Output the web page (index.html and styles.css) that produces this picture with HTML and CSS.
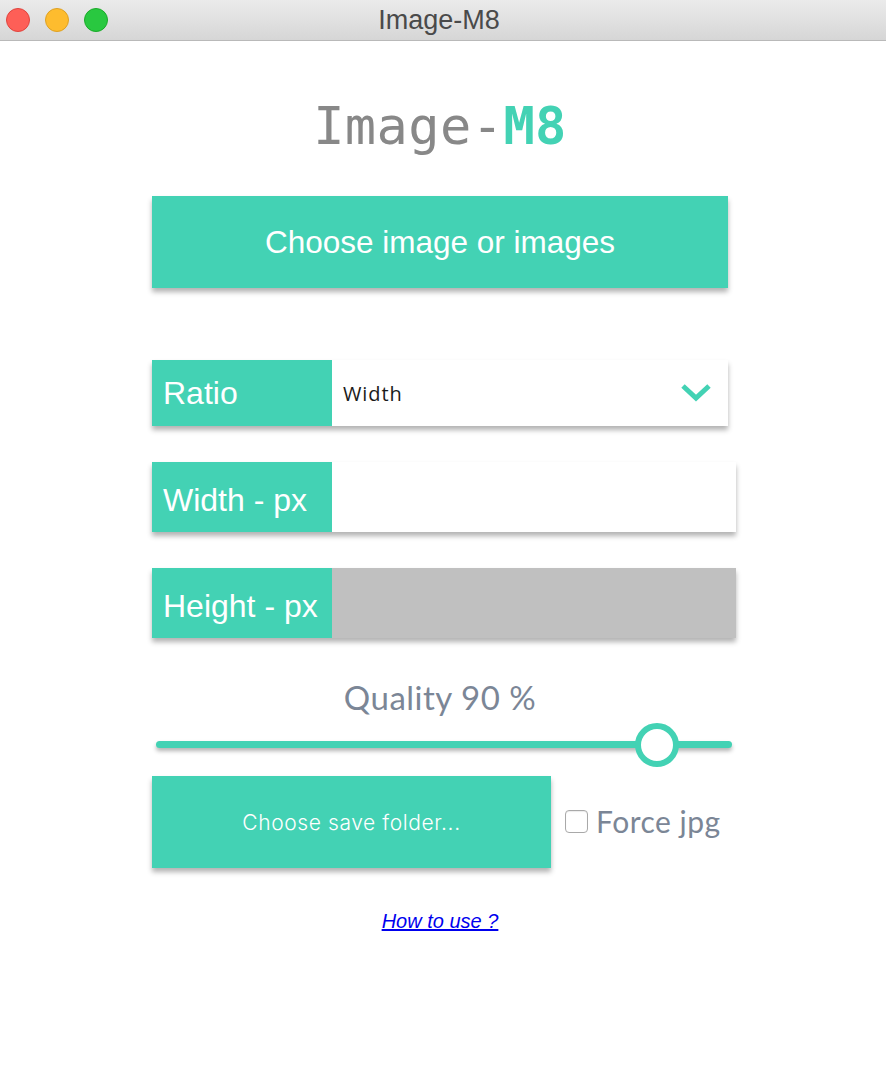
FILE: index.html
```html
<!DOCTYPE html>
<html>
<head>
<meta charset="utf-8">
<link rel="stylesheet" href="styles.css">
</head>
<body>
<div class="titlebar">
  <div class="lights">
    <span class="light red"></span>
    <span class="light yellow"></span>
    <span class="light green"></span>
  </div>
  <div class="wintitle">Image-M8</div>
</div>
<main class="app">
  <h1 class="logo"><span class="logo-a">Image-</span><span class="logo-b">M8</span></h1>
  <div class="btn btn-big">Choose image or images</div>

  <div class="field field-ratio">
    <div class="label">Ratio</div>
    <div class="select">
      <span>Width</span>
      <svg class="chev" width="32" height="20" viewBox="0 0 32 20"><path d="M3 4 L16 16 L29 4" fill="none" stroke="#43d2b4" stroke-width="5"/></svg>
    </div>
  </div>

  <div class="field field-wide">
    <div class="label">Width - px</div>
    <div class="input"></div>
  </div>

  <div class="field field-wide">
    <div class="label">Height - px</div>
    <div class="input disabled"></div>
  </div>

  <div class="quality">Quality 90 %</div>
  <div class="slider">
    <div class="track"></div>
    <div class="thumb"></div>
  </div>

  <div class="save-row">
    <div class="btn btn-save">Choose save folder...</div>
    <label class="force"><span class="box"></span><span>Force jpg</span></label>
  </div>

  <div class="help"><a href="#">How to use ?</a></div>
</main>
</body>
</html>
```

FILE: styles.css
```css
html, body {
  margin: 0;
  padding: 0;
  background: #ffffff;
  width: 886px;
  height: 1092px;
  overflow: hidden;
}

.titlebar {
  height: 40px;
  border-bottom: 1px solid #b9b9b9;
  background: linear-gradient(#ebebeb, #d6d6d6);
  display: flex;
  align-items: center;
  justify-content: center;
  position: relative;
}

.lights {
  position: absolute;
  left: 6px;
  top: 8px;
  display: flex;
  gap: 15px;
}

.light {
  width: 24px;
  height: 24px;
  border-radius: 50%;
  box-sizing: border-box;
}
.red { background: #fe5f57; border: 1px solid #e0443e; }
.yellow { background: #febc2e; border: 1px solid #dea123; }
.green { background: #29c840; border: 1px solid #1aab29; }

.wintitle {
  font-family: "Liberation Sans", Arial, sans-serif;
  font-size: 27px;
  color: #4a4a4a;
  margin-left: -8px;
}

.app {
  margin-left: 152px;
  width: 576px;
  display: flex;
  flex-direction: column;
}

.logo {
  margin: 57px 0 0;
  height: 56px;
  line-height: 56px;
  text-align: center;
  font-family: "DejaVu Sans Mono", monospace;
  font-size: 52px;
  font-weight: normal;
  letter-spacing: 0.4px;
}
.logo-a { color: #888888; }
.logo-b { color: #43d2b4; font-weight: bold; }

.btn {
  background: #43d2b4;
  color: #ffffff;
  display: flex;
  align-items: center;
  justify-content: center;
  box-shadow: 0 4px 5px rgba(0, 0, 0, 0.3);
}

.btn-big {
  margin-top: 42px;
  height: 92px;
  font-family: "Liberation Sans", Arial, sans-serif;
  font-size: 31.5px;
}

.field {
  display: flex;
  box-shadow: 0 4px 5px rgba(0, 0, 0, 0.3);
}

.label {
  width: 180px;
  flex: none;
  background: #43d2b4;
  color: #ffffff;
  font-family: "Liberation Sans", Arial, sans-serif;
  font-size: 32px;
  display: flex;
  align-items: center;
  padding-left: 11px;
  box-sizing: border-box;
}

.field-ratio {
  margin-top: 72px;
  height: 66px;
}

.select {
  flex: 1;
  background: #ffffff;
  display: flex;
  align-items: center;
  justify-content: space-between;
  padding: 0 16px 0 11px;
  font-family: "Open Sans", "Noto Sans", sans-serif;
  font-size: 20px;
  letter-spacing: 0.9px;
  color: #1a1a1a;
}

.chev { margin-top: -2px; }

.field-wide {
  width: 584px;
  height: 70px;
  margin-top: 36px;
}
.field-wide .label { padding-top: 6px; }

.input {
  flex: 1;
  background: #ffffff;
}
.input.disabled { background: #c0c0c0; }

.quality {
  margin-top: 39px;
  text-align: center;
  font-family: "Comic Sans MS", "Lato", sans-serif;
  font-size: 33px;
  letter-spacing: 0.5px;
  color: #7b8696;
  line-height: 40px;
}

.slider {
  position: relative;
  height: 50px;
  margin-top: 3px;
}
.track {
  position: absolute;
  left: 4px;
  right: -4px;
  top: 21px;
  height: 7px;
  border-radius: 4px;
  background: #43d2b4;
  box-shadow: 0 3px 4px rgba(0, 0, 0, 0.3);
}
.thumb {
  position: absolute;
  left: 483px;
  top: 3px;
  width: 44px;
  height: 44px;
  box-sizing: border-box;
  border-radius: 50%;
  border: 6px solid #43d2b4;
  background: #ffffff;
}

.save-row {
  display: flex;
  align-items: center;
  margin-top: 6px;
}

.btn-save {
  width: 399px;
  height: 92px;
  font-family: "Inter", "Noto Sans", sans-serif;
  font-size: 21px;
  letter-spacing: 0.6px;
  font-weight: 300;
}

.force {
  display: flex;
  align-items: center;
  margin-left: 14px;
  font-family: "Comic Sans MS", "Lato", sans-serif;
  font-size: 30px;
  letter-spacing: 0.5px;
  color: #7b8696;
  margin-top: -2px;
}
.box {
  width: 21px;
  height: 21px;
  border: 1px solid #a9a9a9;
  border-radius: 4px;
  background: #ffffff;
  margin-right: 8px;
  box-shadow: inset 0 1px 1px rgba(0,0,0,0.08);
}

.help {
  margin-top: 42px;
  text-align: center;
  font-family: "Liberation Sans", Arial, sans-serif;
  font-size: 20px;
  font-style: italic;
}
.help a { color: #0000ee; }
```
